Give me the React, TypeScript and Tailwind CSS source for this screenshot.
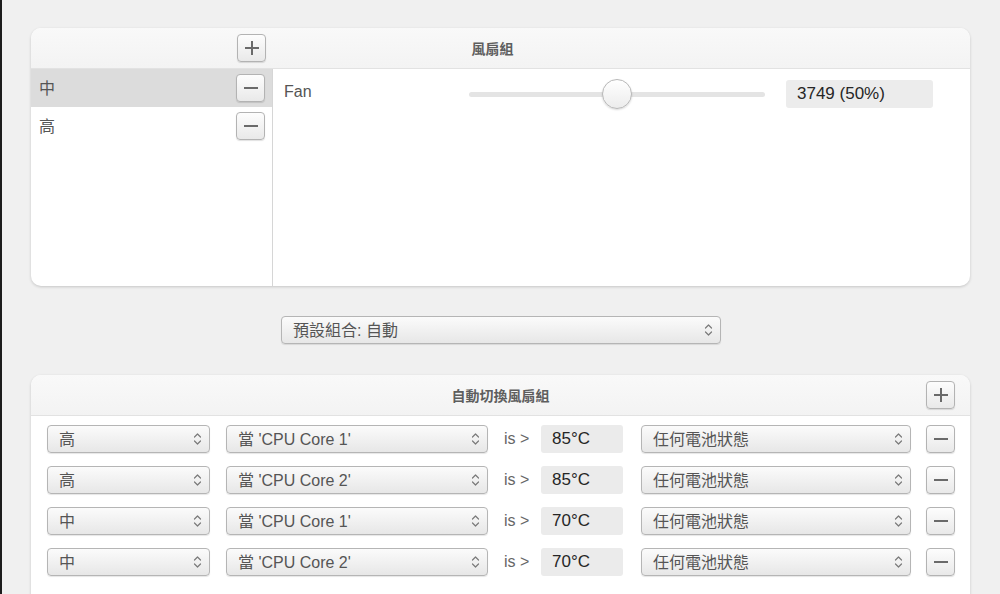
import React from 'react';

const font = { fontFamily: '"Liberation Sans", "Noto Sans CJK TC", sans-serif' };

function Chevron() {
  return (
    <svg width="9" height="14" viewBox="0 0 9 14" fill="none" stroke="#7a7a7a" strokeWidth="1.2" strokeLinecap="round" strokeLinejoin="round">
      <path d="M1.5 5 L4.5 2 L7.5 5" />
      <path d="M1.5 9 L4.5 12 L7.5 9" />
    </svg>
  );
}

function SquareButton({ kind }: { kind: 'plus' | 'minus' }) {
  return (
    <button className="relative w-[29px] h-[28px] shrink-0 rounded-[4px] border border-[#b3b3b3] bg-gradient-to-b from-[#fdfdfd] to-[#e9e9e9] shadow-[0_1px_1px_rgba(0,0,0,0.12)] flex items-center justify-center">
      <span className="block w-[14px] h-[2px] bg-[#6a6a6a]" />
      {kind === 'plus' && <span className="absolute block w-[2px] h-[14px] bg-[#6a6a6a]" />}
    </button>
  );
}

function Select({ label, width }: { label: string; width: string }) {
  return (
    <div className={`${width} h-[28px] shrink-0 rounded-[4px] border border-[#b5b5b5] bg-gradient-to-b from-[#fbfbfb] to-[#e7e7e7] shadow-[0_1px_1px_rgba(0,0,0,0.1)] flex items-center justify-between pl-[11px] pr-[7px]`}>
      <span className="text-[16px] text-[#555] whitespace-nowrap pt-[1px]">{label}</span>
      <Chevron />
    </div>
  );
}

export default function App() {
  const fanGroups = [
    { name: '中', selected: true },
    { name: '高', selected: false },
  ];

  const rules = [
    { group: '高', sensor: "當 'CPU Core 1'", temp: '85°C' },
    { group: '高', sensor: "當 'CPU Core 2'", temp: '85°C' },
    { group: '中', sensor: "當 'CPU Core 1'", temp: '70°C' },
    { group: '中', sensor: "當 'CPU Core 2'", temp: '70°C' },
  ];

  return (
    <div style={font} className="w-[1000px] h-[594px] overflow-hidden bg-[#f0f0f0] border-l-2 border-[#1c1c1c] pl-[29px] pr-[30px] pt-[28px]">

      {/* Fan groups card */}
      <div className="w-[939px] h-[258px] bg-white rounded-[10px] shadow-[0_1px_3px_rgba(0,0,0,0.18)] overflow-hidden flex flex-col">
        <div className="h-[41px] shrink-0 flex items-center bg-gradient-to-b from-[#f9f9f9] to-[#f3f3f3] border-b border-[#e2e2e2]">
          <div className="w-[242px] flex justify-end pr-[7px]">
            <SquareButton kind="plus" />
          </div>
          <div className="flex-1 text-center pr-[258px] pt-[3px] text-[14px] font-bold text-[#5e5e5e]">風扇組</div>
        </div>
        <div className="flex flex-1">
          <div className="w-[242px] border-r border-[#d6d6d6] flex flex-col">
            {fanGroups.map((g) => (
              <div key={g.name} className={`h-[38px] flex items-center justify-between pl-[8px] pr-[7px] ${g.selected ? 'bg-[#dcdcdc]' : ''}`}>
                <span className="text-[16px] text-[#555] pt-[2px]">{g.name}</span>
                <SquareButton kind="minus" />
              </div>
            ))}
          </div>
          <div className="flex-1 pl-[11px] pt-[9px]">
            <div className="flex items-center h-[28px]">
              <span className="w-[185px] text-[16px] text-[#555]">Fan</span>
              <div className="relative w-[296px] h-[5px] mt-[4px] rounded-full bg-[#e4e4e4]">
                <div className="absolute left-[133px] top-[-13px] w-[30px] h-[30px] rounded-full border border-[#b8b8b8] bg-gradient-to-b from-white to-[#ececec] shadow-[0_1px_2px_rgba(0,0,0,0.15)]" />
              </div>
              <div className="ml-[21px] w-[147px] h-[28px] mt-[3px] rounded-[3px] bg-[#ececec] flex items-center pl-[11px] text-[17px] text-[#262626]">3749 (50%)</div>
            </div>
          </div>
        </div>
      </div>

      {/* Preset popup */}
      <div className="flex justify-center mt-[30px] mb-[31px] pl-[1px]">
        <Select label="預設組合: 自動" width="w-[440px]" />
      </div>

      {/* Auto switch card */}
      <div className="w-[939px] h-[260px] bg-white rounded-[10px] shadow-[0_1px_3px_rgba(0,0,0,0.18)] overflow-hidden">
        <div className="h-[41px] flex items-center bg-gradient-to-b from-[#f9f9f9] to-[#f3f3f3] border-b border-[#e2e2e2] pr-[15px]">
          <div className="w-[44px]" />
          <div className="flex-1 text-center pt-[3px] text-[14px] font-bold text-[#5e5e5e]">自動切換風扇組</div>
          <SquareButton kind="plus" />
        </div>
        <div className="flex flex-col gap-[13px] pt-[9px] pl-[16px] pr-[15px]">
          {rules.map((r, i) => (
            <div key={i} className="flex items-center h-[28px]">
              <Select label={r.group} width="w-[163px]" />
              <div className="w-[16px]" />
              <Select label={r.sensor} width="w-[262px]" />
              <span className="w-[53px] pl-[16px] text-[16px] text-[#666]">is &gt;</span>
              <div className="w-[82px] h-[28px] rounded-[3px] bg-[#ebebeb] flex items-center pl-[11px] text-[17px] text-[#262626]">{r.temp}</div>
              <div className="w-[18px]" />
              <Select label="任何電池狀態" width="w-[270px]" />
              <div className="w-[15px]" />
              <SquareButton kind="minus" />
            </div>
          ))}
        </div>
      </div>
    </div>
  );
}
